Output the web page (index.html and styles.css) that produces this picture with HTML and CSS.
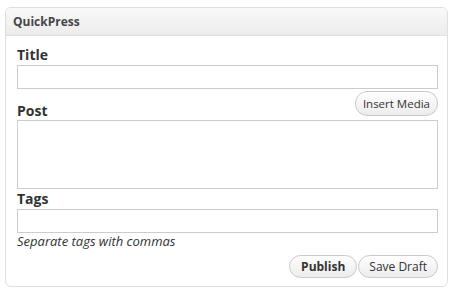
FILE: index.html
```html
<!DOCTYPE html>
<html lang="en">
<head>
    <meta charset="UTF-8">
    <meta name="viewport" content="width=device-width, initial-scale=1.0">
    <title>QuickPress</title>
    <link rel="stylesheet" href="styles.css">
</head>
<body>

    <div class="postbox">
        <h3 class="boxTitle">QuickPress</h3>

        <div class="inside">
            <label class="fieldLabel" for="title">Title</label>
            <input type="text" id="title" class="textField">

            <div class="postRow">
                <label class="fieldLabel" for="content">Post</label>
                <button class="btn btnMedia">Insert Media</button>
            </div>
            <textarea id="content" class="textArea"></textarea>

            <label class="fieldLabel" for="tags">Tags</label>
            <input type="text" id="tags" class="textField">
            <p class="hint">Separate tags with commas</p>

            <div class="actions">
                <button class="btn btnPublish">Publish</button>
                <button class="btn">Save Draft</button>
            </div>
        </div>
    </div>

</body>
</html>
```

FILE: styles.css
```css
body {
    font-family: 'Open Sans', 'DejaVu Sans', sans-serif;
    background-color: #fff;
    margin: 0;
    padding: 7px 6px 0 5px;
    color: #333;
}

.postbox {
    width: 441px;
    border: 1px solid #dfdfdf;
    border-radius: 6px;
    background-color: #fff;
}

.boxTitle {
    margin: 0;
    height: 27px;
    line-height: 27px;
    padding-left: 7px;
    font-size: 12px;
    font-weight: bold;
    color: #464646;
    background: linear-gradient(to bottom, #f9f9f9, #ececec);
    border-bottom: 1px solid #dfdfdf;
    border-radius: 6px 6px 0 0;
}

.inside {
    display: flex;
    flex-direction: column;
    padding: 9px 9px 8px 11px;
}

.fieldLabel {
    display: block;
    font-size: 14px;
    font-weight: bold;
    line-height: 19px;
    color: #333;
    margin-bottom: 1px;
}

.textField {
    box-sizing: border-box;
    height: 24px;
    margin: 0;
    border: 1px solid #ccc;
    background-color: #fff;
}

.textArea {
    box-sizing: border-box;
    height: 69px;
    margin: 0;
    border: 1px solid #ccc;
    resize: none;
}

.postRow {
    display: flex;
    justify-content: space-between;
    align-items: flex-end;
    margin-top: 2px;
}

.postRow .fieldLabel {
    margin-bottom: 0;
}

.btn {
    font-family: 'Open Sans', 'DejaVu Sans', sans-serif;
    font-size: 12px;
    color: #333;
    height: 23px;
    padding: 0 10px;
    border: 1px solid #c9c9c9;
    border-radius: 12px;
    background: linear-gradient(to bottom, #fefefe, #ececec);
    cursor: pointer;
}

.btnMedia {
    font-size: 11.5px;
    height: 25px;
    padding: 0 7px;
    margin-bottom: 4px;
}

.hint {
    margin: 0;
    font-size: 13px;
    font-style: italic;
    line-height: 16px;
    color: #333;
}

.actions {
    display: flex;
    justify-content: flex-end;
    gap: 1px;
    margin-top: 6px;
}

.btnPublish {
    font-weight: bold;
    padding: 0 11px;
}
```
